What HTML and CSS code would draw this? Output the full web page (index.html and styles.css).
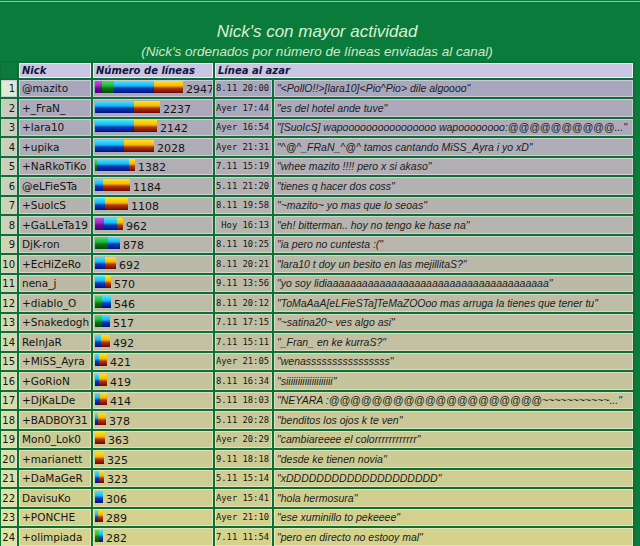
FILE: index.html
```html
<!DOCTYPE html>
<html lang="es">
<head>
<meta charset="utf-8">
<title>Nick's con mayor actividad</title>
<link rel="stylesheet" href="styles.css">
</head>
<body>
<div class="topline"></div>
<div class="heading">
  <div class="title">Nick's con mayor actividad</div>
  <div class="subtitle">(Nick's ordenados por número de líneas enviadas al canal)</div>
</div>
<table class="stats">
  <colgroup>
    <col class="c-rank"><col class="c-nick"><col class="c-lines"><col class="c-date"><col class="c-text">
  </colgroup>
  <thead>
    <tr><th class="blank"></th><th>Nick</th><th>Número de líneas</th><th colspan="2">Línea al azar</th></tr>
  </thead>
  <tbody>
    <tr class="first"><td class="rank">1</td><td class="nick">@mazito</td><td class="lines"><span class="seg p" style="width:7px"></span><span class="seg g" style="width:12px"></span><span class="seg b" style="width:40px"></span><span class="seg o" style="width:29px"></span><span class="num">2947</span></td><td class="date">8.11 20:00</td><td class="text">"&lt;PollO!!&gt;[lara10]&lt;Pio^Pio&gt; dile algoooo"</td></tr>
    <tr><td class="rank">2</td><td class="nick">+_FraN_</td><td class="lines"><span class="seg b" style="width:39px"></span><span class="seg o" style="width:26px"></span><span class="num">2237</span></td><td class="date">Ayer 17:44</td><td class="text">"es del hotel ande tuve"</td></tr>
    <tr><td class="rank">3</td><td class="nick">+lara10</td><td class="lines"><span class="seg b" style="width:39px"></span><span class="seg o" style="width:23px"></span><span class="num">2142</span></td><td class="date">Ayer 16:54</td><td class="text">"[SuoIcS] wapoooooooooooooooo wapoooooooo:@@@@@@@@@@..."</td></tr>
    <tr><td class="rank">4</td><td class="nick">+upika</td><td class="lines"><span class="seg b" style="width:29px"></span><span class="seg o" style="width:30px"></span><span class="num">2028</span></td><td class="date">Ayer 21:31</td><td class="text">"^@^_FRaN_^@^ tamos cantando MiSS_Ayra i yo xD"</td></tr>
    <tr><td class="rank">5</td><td class="nick">+NaRkoTiKo</td><td class="lines"><span class="seg g" style="width:2px"></span><span class="seg b" style="width:32px"></span><span class="seg o" style="width:6px"></span><span class="num">1382</span></td><td class="date">7.11 15:19</td><td class="text">"whee mazito !!!! pero x si akaso"</td></tr>
    <tr><td class="rank">6</td><td class="nick">@eLFieSTa</td><td class="lines"><span class="seg b" style="width:8px"></span><span class="seg o" style="width:27px"></span><span class="num">1184</span></td><td class="date">5.11 21:20</td><td class="text">"tienes q hacer dos coss"</td></tr>
    <tr><td class="rank">7</td><td class="nick">+SuolcS</td><td class="lines"><span class="seg b" style="width:10px"></span><span class="seg o" style="width:23px"></span><span class="num">1108</span></td><td class="date">8.11 19:58</td><td class="text">"~mazito~ yo mas que lo seoas"</td></tr>
    <tr><td class="rank">8</td><td class="nick">+GaLLeTa19</td><td class="lines"><span class="seg p" style="width:9px"></span><span class="seg b" style="width:13px"></span><span class="seg o" style="width:6px"></span><span class="num">962</span></td><td class="date">Hoy 16:13</td><td class="text">"eh! bitterman.. hoy no tengo ke hase na"</td></tr>
    <tr><td class="rank">9</td><td class="nick">DjK-ron</td><td class="lines"><span class="seg g" style="width:13px"></span><span class="seg b" style="width:12px"></span><span class="num">878</span></td><td class="date">8.11 10:25</td><td class="text">"ia pero no cuntesta :("</td></tr>
    <tr><td class="rank">10</td><td class="nick">+EcHiZeRo</td><td class="lines"><span class="seg b" style="width:10px"></span><span class="seg o" style="width:11px"></span><span class="num">692</span></td><td class="date">8.11 20:21</td><td class="text">"lara10 t doy un besito en las mejillitaS?"</td></tr>
    <tr><td class="rank">11</td><td class="nick">nena_j</td><td class="lines"><span class="seg b" style="width:10px"></span><span class="seg o" style="width:6px"></span><span class="num">570</span></td><td class="date">9.11 13:56</td><td class="text">"yo soy lidiaaaaaaaaaaaaaaaaaaaaaaaaaaaaaaaaaaaaaa"</td></tr>
    <tr><td class="rank">12</td><td class="nick">+diablo_O</td><td class="lines"><span class="seg g" style="width:7px"></span><span class="seg b" style="width:9px"></span><span class="num">546</span></td><td class="date">8.11 20:12</td><td class="text">"ToMaAaA[eLFieSTa]TeMaZOOoo mas arruga la tienes que tener tu"</td></tr>
    <tr><td class="rank">13</td><td class="nick">+Snakedogh</td><td class="lines"><span class="seg g" style="width:7px"></span><span class="seg b" style="width:8px"></span><span class="num">517</span></td><td class="date">7.11 17:15</td><td class="text">"~satina20~ ves algo asi"</td></tr>
    <tr><td class="rank">14</td><td class="nick">ReInJaR</td><td class="lines"><span class="seg b" style="width:6px"></span><span class="seg o" style="width:9px"></span><span class="num">492</span></td><td class="date">7.11 15:11</td><td class="text">"_Fran_ en ke kurraS?"</td></tr>
    <tr><td class="rank">15</td><td class="nick">+MiSS_Ayra</td><td class="lines"><span class="seg b" style="width:4px"></span><span class="seg o" style="width:8px"></span><span class="num">421</span></td><td class="date">Ayer 21:05</td><td class="text">"wenassssssssssssssss"</td></tr>
    <tr><td class="rank">16</td><td class="nick">+GoRioN</td><td class="lines"><span class="seg b" style="width:4px"></span><span class="seg o" style="width:8px"></span><span class="num">419</span></td><td class="date">8.11 16:34</td><td class="text">"siiiiiiiiiiiiiiiiiiii"</td></tr>
    <tr><td class="rank">17</td><td class="nick">+DjKaLDe</td><td class="lines"><span class="seg b" style="width:5px"></span><span class="seg o" style="width:7px"></span><span class="num">414</span></td><td class="date">5.11 18:03</td><td class="text">"NEYARA :@@@@@@@@@@@@@@@@@@@@~~~~~~~~~~~..."</td></tr>
    <tr><td class="rank">18</td><td class="nick">+BADBOY31</td><td class="lines"><span class="seg b" style="width:3px"></span><span class="seg o" style="width:8px"></span><span class="num">378</span></td><td class="date">5.11 20:28</td><td class="text">"benditos los ojos k te ven"</td></tr>
    <tr><td class="rank">19</td><td class="nick">Mon0_Lok0</td><td class="lines"><span class="seg o" style="width:10px"></span><span class="num">363</span></td><td class="date">Ayer 20:29</td><td class="text">"cambiareeee el colorrrrrrrrrrrr"</td></tr>
    <tr><td class="rank">20</td><td class="nick">+marianett</td><td class="lines"><span class="seg o" style="width:9px"></span><span class="num">325</span></td><td class="date">9.11 18:18</td><td class="text">"desde ke tienen novia"</td></tr>
    <tr><td class="rank">21</td><td class="nick">+DaMaGeR</td><td class="lines"><span class="seg b" style="width:4px"></span><span class="seg o" style="width:5px"></span><span class="num">323</span></td><td class="date">5.11 15:14</td><td class="text">"xDDDDDDDDDDDDDDDDDDDD"</td></tr>
    <tr><td class="rank">22</td><td class="nick">DavisuKo</td><td class="lines"><span class="seg b" style="width:8px"></span><span class="num">306</span></td><td class="date">Ayer 15:41</td><td class="text">"hola hermosura"</td></tr>
    <tr><td class="rank">23</td><td class="nick">+PONCHE</td><td class="lines"><span class="seg b" style="width:3px"></span><span class="seg o" style="width:5px"></span><span class="num">289</span></td><td class="date">Ayer 21:10</td><td class="text">"ese xuminillo to pekeeee"</td></tr>
    <tr><td class="rank">24</td><td class="nick">+olimpiada</td><td class="lines"><span class="seg g" style="width:4px"></span><span class="seg b" style="width:4px"></span><span class="num">282</span></td><td class="date">7.11 11:54</td><td class="text">"pero en directo no estooy mal"</td></tr>
  </tbody>
</table>
</body>
</html>
```
FILE: styles.css
```css
html, body {
  margin: 0;
  padding: 0;
}
body {
  background: #0b7b3b;
  font-family: "DejaVu Sans", Verdana, sans-serif;
  overflow: hidden;
}
.topline {
  height: 1px;
  margin-top: 1px;
  background: #8cc9a2;
}
.heading {
  width: 636px;
  margin-left: -1px;
  text-align: center;
  font-family: "Liberation Sans", Arial, sans-serif;
  font-style: italic;
  color: #dcefd4;
}
.title {
  font-size: 17px;
  line-height: 20px;
  padding-top: 20px;
}
.subtitle {
  font-size: 13.5px;
  line-height: 17px;
  margin-top: 1px;
  color: #cfe8c8;
}
.stats {
  margin-top: 1px;
  margin-left: -1px;
  width: 636px;
  table-layout: fixed;
  border-collapse: separate;
  border-spacing: 2px;
  background: #0a7034;
}
.c-rank { width: 16px; }
.c-nick { width: 72px; }
.c-lines { width: 120px; }
.c-date { width: 57px; }
.c-text { width: 359px; }

.stats th {
  box-sizing: border-box;
  height: 15px;
  padding: 0 0 0 2px;
  background: #c9c5e2;
  border: 1px solid #eeedf8;
  color: #14143a;
  font: italic bold 10px/12px "DejaVu Sans", Verdana, sans-serif;
  text-align: left;
  white-space: nowrap;
}
.stats th.blank {
  background: #0b7b3b;
  border-color: #0b7b3b;
}
.stats td {
  --c: #a9a7bd;
  box-sizing: border-box;
  height: 17px;
  padding: 0;
  background: var(--c);
  border: 1px solid color-mix(in srgb, var(--c), white 40%);
  color: #141414;
  font-size: 10.5px;
  line-height: 13px;
  white-space: nowrap;
  overflow: hidden;
  vertical-align: middle;
}
.stats tbody tr:nth-child(even) td {
  height: 18px;
}
.stats td.rank {
  background: color-mix(in srgb, var(--c) 55%, #e8f8c0);
  text-align: right;
  padding-right: 1px;
  font-size: 10px;
}
.stats tr.first td.rank {
  background: #dfe9d8;
}
.stats td.nick {
  padding-left: 2px;
}
.stats td.lines {
  padding-left: 1px;
  font-size: 11px;
}
.seg {
  display: inline-block;
  height: 12px;
  vertical-align: baseline;
}
.seg.p { background: linear-gradient(#c24ee4, #a028c8 40%, #6a0a94 60%, #4a0066); }
.seg.g { background: linear-gradient(#4ee060, #22b83a 40%, #0a7a14 60%, #054a08); }
.seg.b { background: linear-gradient(#48e4ff, #18b8f0 40%, #0a3cc0 60%, #021478); }
.seg.o { background: linear-gradient(#ffe41c, #f8b800 40%, #b03a00 60%, #720400); }
.num {
  margin-left: 3px;
}
.stats td.date {
  font-family: "DejaVu Sans Mono", monospace;
  font-size: 8.8px;
  text-align: right;
  padding-right: 2px;
  color: #141414;
}
.stats td.text {
  font-family: "Liberation Sans", Arial, sans-serif;
  font-style: italic;
  font-size: 10.5px;
  padding-left: 2px;
  color: #1c1c1c;
}

.stats tbody tr:nth-child(1) td { --c: #a9a7bd; }
.stats tbody tr:nth-child(2) td { --c: #aba9bb; }
.stats tbody tr:nth-child(3) td { --c: #adabb9; }
.stats tbody tr:nth-child(4) td { --c: #afadb6; }
.stats tbody tr:nth-child(5) td { --c: #b1afb4; }
.stats tbody tr:nth-child(6) td { --c: #b3b1b2; }
.stats tbody tr:nth-child(7) td { --c: #b5b3b0; }
.stats tbody tr:nth-child(8) td { --c: #b6b4ae; }
.stats tbody tr:nth-child(9) td { --c: #b8b6ac; }
.stats tbody tr:nth-child(10) td { --c: #bab8a9; }
.stats tbody tr:nth-child(11) td { --c: #bcbaa7; }
.stats tbody tr:nth-child(12) td { --c: #bebca5; }
.stats tbody tr:nth-child(13) td { --c: #c0bea3; }
.stats tbody tr:nth-child(14) td { --c: #c2c0a1; }
.stats tbody tr:nth-child(15) td { --c: #c4c29f; }
.stats tbody tr:nth-child(16) td { --c: #c6c49c; }
.stats tbody tr:nth-child(17) td { --c: #c8c69a; }
.stats tbody tr:nth-child(18) td { --c: #cac898; }
.stats tbody tr:nth-child(19) td { --c: #cbc996; }
.stats tbody tr:nth-child(20) td { --c: #cdcb94; }
.stats tbody tr:nth-child(21) td { --c: #cfcd92; }
.stats tbody tr:nth-child(22) td { --c: #d1cf8f; }
.stats tbody tr:nth-child(23) td { --c: #d3d18d; }
.stats tbody tr:nth-child(24) td { --c: #d5d38b; }
```
